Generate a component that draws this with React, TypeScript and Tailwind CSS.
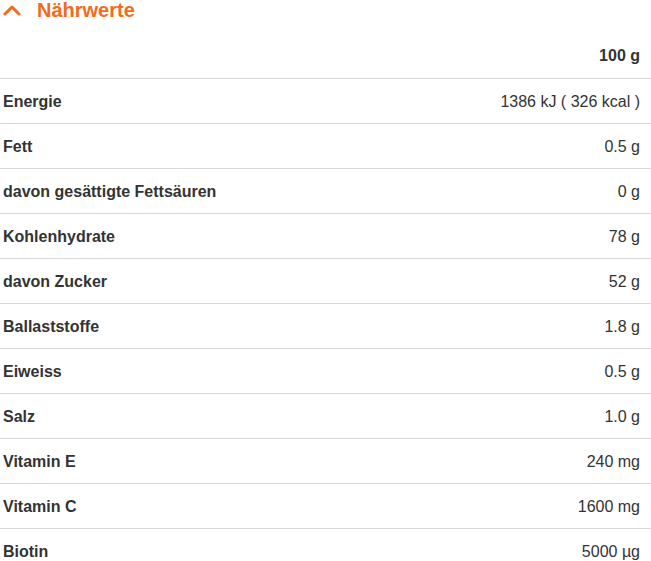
const rows: [string, string][] = [
  ["Energie", "1386 kJ ( 326 kcal )"],
  ["Fett", "0.5 g"],
  ["davon gesättigte Fettsäuren", "0 g"],
  ["Kohlenhydrate", "78 g"],
  ["davon Zucker", "52 g"],
  ["Ballaststoffe", "1.8 g"],
  ["Eiweiss", "0.5 g"],
  ["Salz", "1.0 g"],
  ["Vitamin E", "240 mg"],
  ["Vitamin C", "1600 mg"],
  ["Biotin", "5000 µg"],
];

export default function App() {
  return (
    <div className="w-[651px] h-[561px] overflow-hidden bg-white text-[#333] font-['Liberation_Sans',Arial,sans-serif]">
      {/* Titel */}
      <div className="flex items-center h-[20px] text-[#f26b1d]">
        <svg className="w-[18px] h-[12px] ml-[3px]" viewBox="0 0 18 12" fill="none">
          <path d="M2 10l7-7 7 7" stroke="currentColor" strokeWidth={3} strokeLinecap="round" strokeLinejoin="round" />
        </svg>
        <h2 className="ml-[16px] text-[20px] font-bold leading-none">Nährwerte</h2>
      </div>

      <table className="mt-[13px] w-full border-collapse text-[16px]">
        <thead>
          <tr className="border-b border-[#d6d6d6]">
            <th className="h-[45px] pt-[2px]" />
            <th className="h-[45px] pt-[2px] pr-[11px] text-right font-bold">100 g</th>
          </tr>
        </thead>
        <tbody>
          {rows.map(([label, value]) => (
            <tr key={label} className="border-b border-[#d6d6d6]">
              <td className="h-[45px] pt-[2px] pl-[3px] text-left font-bold">{label}</td>
              <td className="h-[45px] pt-[2px] pr-[11px] text-right">{value}</td>
            </tr>
          ))}
        </tbody>
      </table>
    </div>
  );
}
